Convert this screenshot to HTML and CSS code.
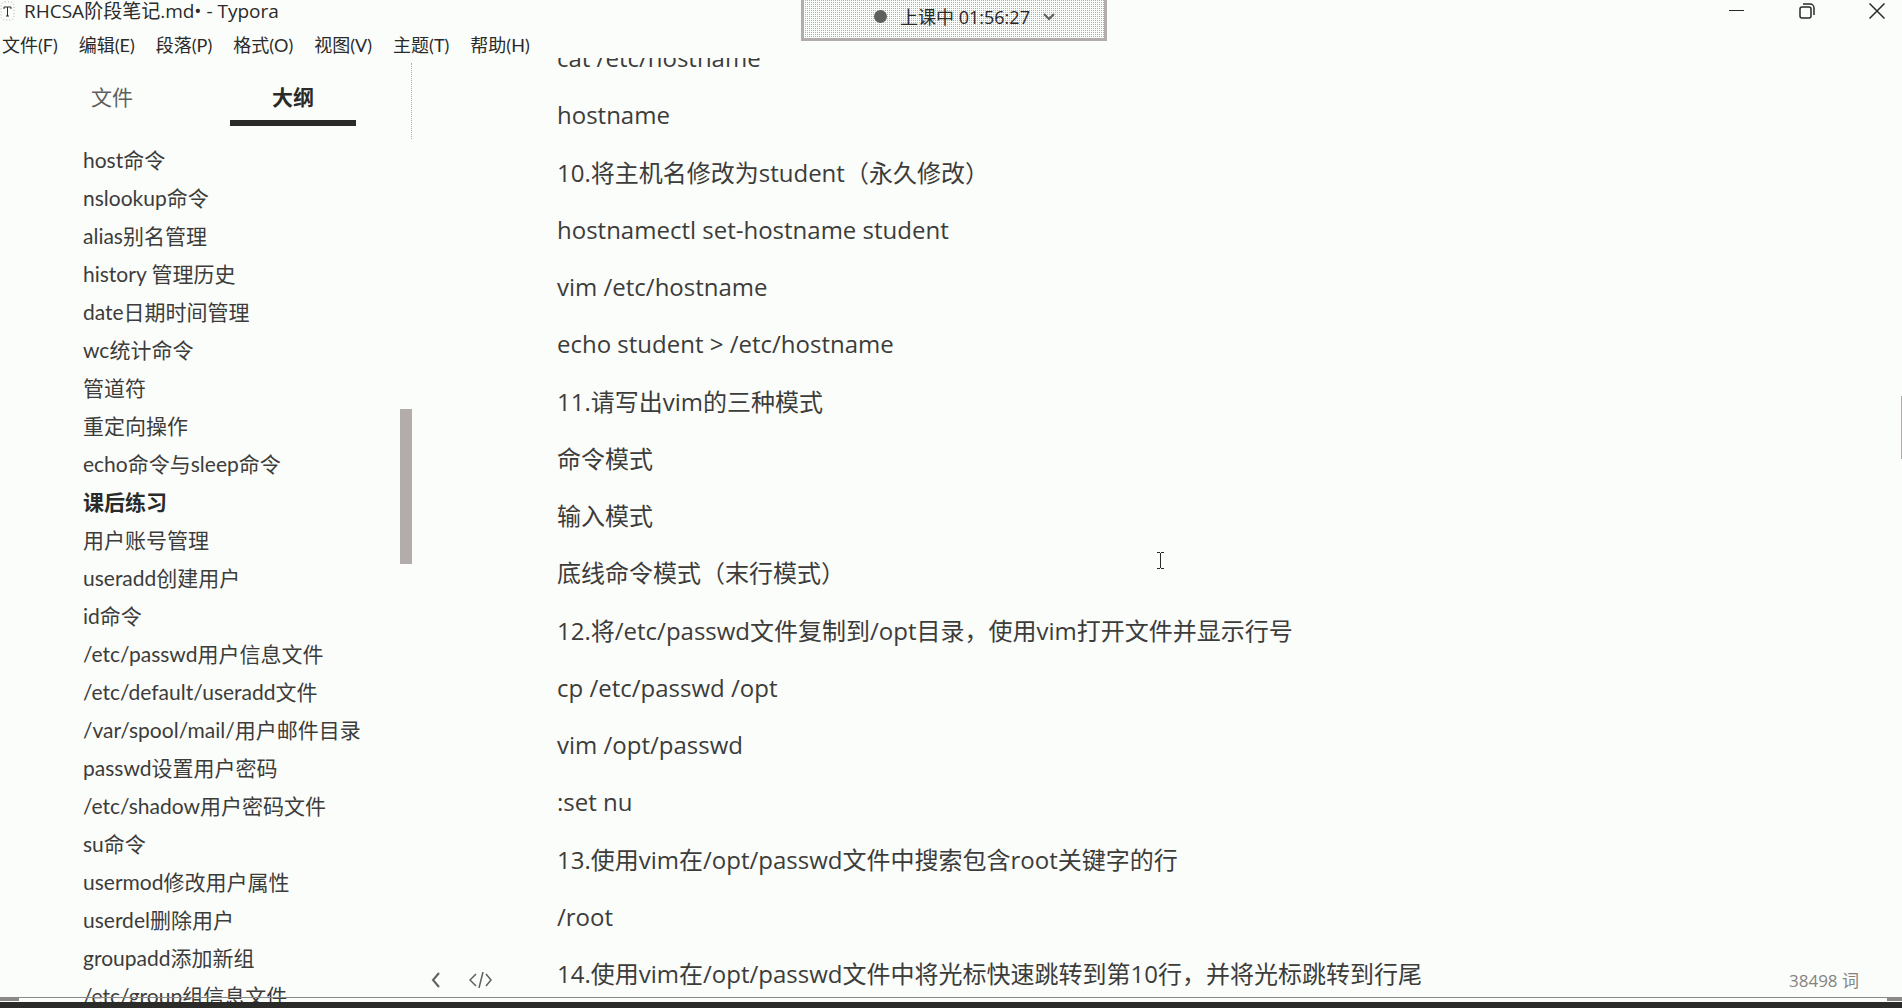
FILE: index.html
```html
<!DOCTYPE html>
<html lang="zh-CN">
<head>
<meta charset="utf-8">
<title>RHCSA阶段笔记.md• - Typora</title>
<link rel="stylesheet" href="styles.css">
</head>
<body>
<div class="window">
  <header class="titlebar">
    <svg class="app-icon" width="16" height="22" viewBox="0 0 16 22"><rect x="1" y="2" width="13" height="18" rx="4" fill="none" stroke="#b2adaa" stroke-dasharray="1 2"/><path d="M4 9V7h7v2M7.500 7v9M6 16h3" fill="none" stroke="#2a2a29"/></svg>
    <h1 class="title">RHCSA阶段笔记.md• - Typora</h1>
    <div class="controls">
      <button type="button" aria-label="最小化"><svg width="16" height="16" viewBox="0 0 16 16"><path d="M0 7.500h15"/></svg></button>
      <button type="button" aria-label="还原"><svg width="16" height="16" viewBox="0 0 16 16"><rect x="1" y="4" width="11" height="11" rx="2" stroke-width="1.500"/><path d="M4 1h7a4 4 0 0 1 4 4v7" stroke-width="1.500"/></svg></button>
      <button type="button" aria-label="关闭"><svg width="16" height="16" viewBox="0 0 16 16"><path d="M.5.5l15 15M15.500.5l-15 15" stroke-width="1.500"/></svg></button>
    </div>
  </header>
  <nav class="menubar">
    <button type="button">文件(F)</button>
    <button type="button">编辑(E)</button>
    <button type="button">段落(P)</button>
    <button type="button">格式(O)</button>
    <button type="button">视图(V)</button>
    <button type="button">主题(T)</button>
    <button type="button">帮助(H)</button>
  </nav>
  <div class="workspace">
    <aside class="sidebar">
      <div class="tabs">
        <button type="button" class="tab">文件</button>
        <button type="button" class="tab active">大纲</button>
      </div>
      <ul class="outline">
        <li><a href="#">host命令</a></li>
        <li><a href="#">nslookup命令</a></li>
        <li><a href="#">alias别名管理</a></li>
        <li><a href="#">history 管理历史</a></li>
        <li><a href="#">date日期时间管理</a></li>
        <li><a href="#">wc统计命令</a></li>
        <li><a href="#">管道符</a></li>
        <li><a href="#">重定向操作</a></li>
        <li><a href="#">echo命令与sleep命令</a></li>
        <li><a href="#" class="current">课后练习</a></li>
        <li><a href="#">用户账号管理</a></li>
        <li><a href="#">useradd创建用户</a></li>
        <li><a href="#">id命令</a></li>
        <li><a href="#">/etc/passwd用户信息文件</a></li>
        <li><a href="#">/etc/default/useradd文件</a></li>
        <li><a href="#">/var/spool/mail/用户邮件目录</a></li>
        <li><a href="#">passwd设置用户密码</a></li>
        <li><a href="#">/etc/shadow用户密码文件</a></li>
        <li><a href="#">su命令</a></li>
        <li><a href="#">usermod修改用户属性</a></li>
        <li><a href="#">userdel删除用户</a></li>
        <li><a href="#">groupadd添加新组</a></li>
        <li><a href="#">/etc/group组信息文件</a></li>
      </ul>
      <div class="side-thumb"></div>
    </aside>
    <main class="editor">
      <article class="document">
        <p>cat /etc/hostname</p>
        <p>hostname</p>
        <p>10.将主机名修改为student（永久修改）</p>
        <p>hostnamectl set-hostname student</p>
        <p>vim /etc/hostname</p>
        <p>echo student &gt; /etc/hostname</p>
        <p>11.请写出vim的三种模式</p>
        <p>命令模式</p>
        <p>输入模式</p>
        <p>底线命令模式（末行模式）</p>
        <p>12.将/etc/passwd文件复制到/opt目录，使用vim打开文件并显示行号</p>
        <p>cp /etc/passwd /opt</p>
        <p>vim /opt/passwd</p>
        <p>:set nu</p>
        <p>13.使用vim在/opt/passwd文件中搜索包含root关键字的行</p>
        <p>/root</p>
        <p>14.使用vim在/opt/passwd文件中将光标快速跳转到第10行，并将光标跳转到行尾</p>
      </article>
      <div class="view-tools">
        <button type="button" aria-label="隐藏侧边栏"><svg width="10" height="16" viewBox="0 0 10 16"><path d="M8 1L2 8l6 7" stroke-width="2"/></svg></button>
        <button type="button" aria-label="源代码模式"><svg width="24" height="16" viewBox="0 0 24 16"><path d="M7 2L1 8l6 6M17 2l5 6-5 6M14 0l-4 16" stroke-width="1.500"/></svg></button>
      </div>
      <button type="button" class="word-count">38498 词</button>
      <div class="page-thumb"></div>
    </main>
  </div>
  <footer class="desktop-edge"></footer>
</div>
<button type="button" class="class-timer">
  <span class="rec"></span><span>上课中 01:56:27</span>
  <svg width="12" height="8" viewBox="0 0 12 8"><path d="M1 1l5 5 5-5" stroke-width="2"/></svg>
</button>
<svg class="text-cursor" width="8" height="17" viewBox="0 0 8 17"><path d="M0 .5h3M4 .5h3M3.500 1v15M0 16.500h3M4 16.500h3" stroke="#2a2a29" fill="none"/></svg>
</body>
</html>
```
FILE: styles.css
```css
:root {
  --paper: #fbfdfa;
  --ink: #2a2a29;
  --muted: #5f605e;
  --grey: #b2adaa;
}
* { box-sizing: border-box; }
body {
  margin: 0;
  background: var(--paper);
  color: var(--ink);
  font: 18px/24px "Open Sans", "Noto Sans CJK SC", sans-serif;
}
button {
  padding: 0;
  border: 0;
  background: none;
  color: inherit;
  font: inherit;
}
svg { display: block; fill: none; }
button svg { stroke: var(--ink); }
.window {
  height: 100vh;
  display: flex;
  flex-direction: column;
  overflow: hidden;
}
.titlebar {
  display: flex;
  align-items: flex-start;
  height: 32px;
}
.app-icon { margin-right: 8px; }
.title {
  flex: 1;
  margin: 0;
  font-size: 19px;
  font-weight: 400;
  line-height: 22px;
}
.controls {
  display: flex;
  gap: 54px;
  padding: 3px 17px 0 0;
}
.menubar {
  display: flex;
  gap: 21px;
  height: 26px;
  padding-left: 2px;
  font-family: "Lato", "Noto Sans CJK SC", sans-serif;
}
.workspace {
  flex: 1;
  min-height: 0;
  display: flex;
}
.sidebar {
  position: relative;
  width: 412px;
  overflow: hidden;
  padding-top: 5px;
  font: 21px/38px "Lato", "Noto Sans CJK SC", sans-serif;
}
.tabs {
  display: flex;
  gap: 55px;
  height: 76px;
  margin-bottom: 2px;
  padding: 15px 0 13px 49px;
  border-right: 1px dotted var(--grey);
}
.tab {
  width: 126px;
  padding-bottom: 4px;
  border-bottom: 6px solid transparent;
  color: var(--muted);
}
.tab.active {
  border-color: var(--ink);
  color: var(--ink);
  font-weight: 700;
}
.outline {
  margin: 0;
  padding: 0 0 0 83px;
  list-style: none;
}
.outline a {
  display: block;
  color: #3c3c3b;
  text-decoration: none;
  white-space: nowrap;
}
.outline .current { color: var(--ink); font-weight: 700; }
.side-thumb {
  position: absolute;
  top: 351px;
  right: 0;
  width: 12px;
  height: 155px;
  background: var(--grey);
}
.editor {
  position: relative;
  flex: 1;
  display: flex;
  overflow: hidden;
}
.document {
  flex: 1;
  display: flex;
  flex-direction: column;
  justify-content: space-between;
  margin: -19px 0 9px;
  padding-left: 145px;
  color: #3c3c3b;
  font-size: 24px;
  line-height: 38px;
}
.document p { margin: 0; }
.view-tools {
  position: absolute;
  left: 19px;
  bottom: 14px;
  display: flex;
  gap: 28px;
}
.view-tools svg { stroke: var(--muted); }
.word-count {
  position: absolute;
  right: 43px;
  bottom: 9px;
  color: #858381;
  font-size: 17px;
}
.page-thumb {
  position: absolute;
  top: 338px;
  right: 0;
  width: 1px;
  height: 63px;
  background: var(--grey);
}
.desktop-edge {
  position: relative;
  height: 6px;
  background: var(--ink);
}
.desktop-edge::before {
  content: "";
  position: absolute;
  inset: -5px 0 auto;
  border-top: 1px solid #8b8987;
}
.desktop-edge::after {
  content: "";
  position: absolute;
  inset: -4px 0 auto;
  height: 3px;
  background: linear-gradient(90deg, #8b8987 19px, transparent 19px calc(100% - 15px), #8b8987 0);
}
.class-timer {
  position: absolute;
  top: 0;
  left: 801px;
  width: 306px;
  height: 41px;
  display: flex;
  justify-content: center;
  align-items: center;
  gap: 13px;
  padding: 0 0 5px 21px;
  border: 3px solid var(--grey);
  border-top: 0;
  background: conic-gradient(var(--grey) 25%, var(--paper) 0) 0 0 / 2px 2px;
}
.class-timer svg { stroke: var(--muted); }
.rec {
  width: 13px;
  height: 13px;
  border-radius: 50%;
  background: var(--muted);
}
.text-cursor {
  position: absolute;
  top: 552px;
  left: 1157px;
}
```
